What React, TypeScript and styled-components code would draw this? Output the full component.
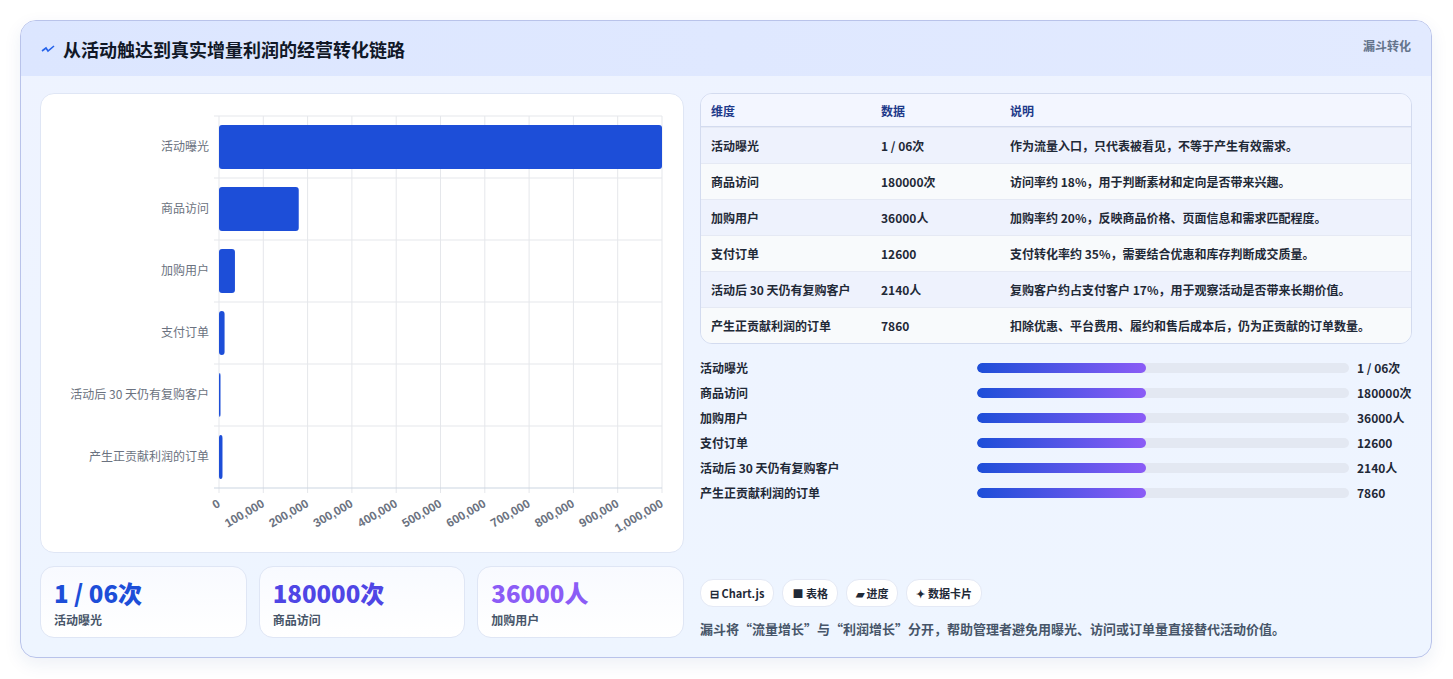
import React from 'react';
import styled, { createGlobalStyle } from 'styled-components';

const FONT = '"Noto Sans CJK SC", "Noto Sans", sans-serif';

const GlobalStyle = createGlobalStyle`
  body {
    margin: 0;
    background: #ffffff;
    font-family: ${FONT};
  }
`;

const Page = styled.div`
  padding: 20px 21px 22px 20px;
`;

const Card = styled.section`
  border: 1px solid #b9c3ea;
  border-radius: 16px;
  background: linear-gradient(180deg, #eef3ff 0%, #eef5ff 100%);
  overflow: hidden;
  box-shadow: 0 6px 18px rgba(30, 58, 138, 0.08);
`;

const Header = styled.header`
  height: 55px;
  display: flex;
  align-items: center;
  justify-content: space-between;
  padding: 0 20px 0 20px;
  background: linear-gradient(90deg, #dce6ff 0%, #e2eaff 100%);
`;

const Title = styled.h1`
  margin: 0;
  display: flex;
  align-items: center;
  gap: 8px;
  font-size: 18px;
  font-weight: 700;
  color: #111827;
`;

const Tag = styled.span`
  align-self: flex-start;
  margin-top: 16px;
  font-size: 12px;
  font-weight: 700;
  color: #64748b;
`;

const Body = styled.div`
  display: grid;
  grid-template-columns: 644px 1fr;
  gap: 16px;
  padding: 17px 19px 19px 19px;
`;

const LeftCol = styled.div`
  display: flex;
  flex-direction: column;
  gap: 13px;
`;

const ChartCard = styled.div`
  height: 460px;
  background: #ffffff;
  border: 1px solid #dfe6f5;
  border-radius: 14px;
  box-sizing: border-box;
`;

const KpiRow = styled.div`
  display: grid;
  grid-template-columns: repeat(3, 1fr);
  gap: 12px;
`;

const Kpi = styled.div`
  height: 72px;
  box-sizing: border-box;
  padding: 10px 13px;
  background: linear-gradient(180deg, #f8faff, #ffffff);
  border: 1px solid #dfe6f5;
  border-radius: 14px;
`;

const KpiValue = styled.div<{ $color: string }>`
  font-size: 24px;
  font-weight: 800;
  line-height: 32px;
  color: ${(p) => p.$color};
`;

const KpiLabel = styled.div`
  font-size: 12px;
  font-weight: 600;
  color: #475569;
  margin-top: 2px;
`;

const RightCol = styled.div`
  display: flex;
  flex-direction: column;
`;

const Table = styled.table`
  width: 100%;
  border-collapse: separate;
  border-spacing: 0;
  border: 1px solid #d3dbef;
  border-radius: 12px;
  overflow: hidden;
  font-size: 12px;
`;

const Th = styled.th`
  text-align: left;
  height: 32px;
  padding: 0 10px;
  font-weight: 700;
  color: #1e3a8a;
  background: #f3f6ff;
  border-bottom: 1px solid #d3dbef;
`;

const Tr = styled.tr<{ $alt: boolean }>`
  background: ${(p) => (p.$alt ? '#f8fafc' : '#eef2fd')};
`;

const Td = styled.td`
  height: 35px;
  padding: 0 10px;
  font-weight: 600;
  color: #1f2937;
  border-top: 1px solid #e5e9f4;
`;

const Progress = styled.div`
  margin-top: 11px;
  display: flex;
  flex-direction: column;
`;

const PRow = styled.div`
  display: grid;
  grid-template-columns: 269px 372px 1fr;
  gap: 8px;
  align-items: center;
  height: 25px;
  font-size: 12px;
  font-weight: 700;
  color: #1f2937;
`;

const Track = styled.div`
  height: 10px;
  border-radius: 5px;
  background: #e3e8f2;
  overflow: hidden;
`;

const Fill = styled.div`
  height: 100%;
  border-radius: 5px;
  background: linear-gradient(90deg, #1d4ed8, #8b5cf6);
`;

const Chips = styled.div`
  margin-top: auto;
  display: flex;
  gap: 8px;
`;

const Chip = styled.span`
  height: 26px;
  padding: 0 9px;
  display: flex;
  align-items: center;
  gap: 4px;
  border-radius: 13px;
  background: #ffffff;
  border: 1px solid #e4e9f5;
  font-size: 11px;
  font-weight: 700;
  color: #1f2937;
`;

const Note = styled.p`
  margin: 12px 0 0;
  font-size: 13px;
  font-weight: 600;
  color: #475569;
`;

const rows = [
  { name: '活动曝光', value: 1000000, data: '1 / 06次', desc: '作为流量入口，只代表被看见，不等于产生有效需求。' },
  { name: '商品访问', value: 180000, data: '180000次', desc: '访问率约 18%，用于判断素材和定向是否带来兴趣。' },
  { name: '加购用户', value: 36000, data: '36000人', desc: '加购率约 20%，反映商品价格、页面信息和需求匹配程度。' },
  { name: '支付订单', value: 12600, data: '12600', desc: '支付转化率约 35%，需要结合优惠和库存判断成交质量。' },
  { name: '活动后 30 天仍有复购客户', value: 2140, data: '2140人', desc: '复购客户约占支付客户 17%，用于观察活动是否带来长期价值。' },
  { name: '产生正贡献利润的订单', value: 7860, data: '7860', desc: '扣除优惠、平台费用、履约和售后成本后，仍为正贡献的订单数量。' },
];

const X0 = 178;
const PW = 443;
const Y0 = 22;
const RH = 62;

const FunnelChart: React.FC = () => (
  <svg width="644" height="460" viewBox="0 0 644 460">
    {Array.from({ length: 11 }).map((_, i) => {
      const x = X0 + (PW * i) / 10;
      return (
        <g key={i}>
          <line x1={x} y1={Y0} x2={x} y2={Y0 + RH * 6 + 5} stroke="#e5e7eb" />
          <text
            x={x + 2}
            y={Y0 + RH * 6 + 18}
            fontSize="12"
            fontWeight="700"
            fill="#6b7280"
            fontFamily='"Liberation Sans", sans-serif'
            textAnchor="end"
            transform={`rotate(-30 ${x + 2} ${Y0 + RH * 6 + 18})`}
          >
            {(i * 100000).toLocaleString('en-US')}
          </text>
        </g>
      );
    })}
    {Array.from({ length: 7 }).map((_, i) => (
      <line key={i} x1={X0 - 5} y1={Y0 + RH * i} x2={X0 + PW} y2={Y0 + RH * i} stroke={i === 6 ? '#cbd5e1' : '#e5e7eb'} />
    ))}
    {rows.map((r, i) => {
      const cy = Y0 + RH * i + RH / 2;
      return (
        <g key={r.name}>
          <text x={X0 - 10} y={cy + 4} fontSize="12" fill="#6b7280" textAnchor="end" fontFamily={FONT}>
            {r.name}
          </text>
          <rect x={X0} y={cy - 22} width={Math.max(1.5, (PW * r.value) / 1000000)} height={44} rx={3} fill="#1d4ed8" />
        </g>
      );
    })}
  </svg>
);

const App: React.FC = () => (
  <Page>
    <GlobalStyle />
    <Card>
      <Header>
        <Title>
          <svg width="14" height="10" viewBox="0 0 14 10">
            <path d="M1 7 L5 4 L7 7 L13 2" stroke="#2563eb" strokeWidth="1.6" fill="none" />
          </svg>
          从活动触达到真实增量利润的经营转化链路
        </Title>
        <Tag>漏斗转化</Tag>
      </Header>
      <Body>
        <LeftCol>
          <ChartCard>
            <FunnelChart />
          </ChartCard>
          <KpiRow>
            <Kpi>
              <KpiValue $color="#1d4ed8">1 / 06次</KpiValue>
              <KpiLabel>活动曝光</KpiLabel>
            </Kpi>
            <Kpi>
              <KpiValue $color="#4f46e5">180000次</KpiValue>
              <KpiLabel>商品访问</KpiLabel>
            </Kpi>
            <Kpi>
              <KpiValue $color="#8b5cf6">36000人</KpiValue>
              <KpiLabel>加购用户</KpiLabel>
            </Kpi>
          </KpiRow>
        </LeftCol>
        <RightCol>
          <Table>
            <thead>
              <tr>
                <Th style={{ width: 150 }}>维度</Th>
                <Th style={{ width: 109 }}>数据</Th>
                <Th>说明</Th>
              </tr>
            </thead>
            <tbody>
              {rows.map((r, i) => (
                <Tr key={r.name} $alt={i % 2 === 1}>
                  <Td>{r.name}</Td>
                  <Td>{r.data}</Td>
                  <Td>{r.desc}</Td>
                </Tr>
              ))}
            </tbody>
          </Table>
          <Progress>
            {rows.map((r) => (
              <PRow key={r.name}>
                <span>{r.name}</span>
                <Track>
                  <Fill style={{ width: '45.4%' }} />
                </Track>
                <span>{r.data}</span>
              </PRow>
            ))}
          </Progress>
          <Chips>
            <Chip>⊟ Chart.js</Chip>
            <Chip>■ 表格</Chip>
            <Chip>▰ 进度</Chip>
            <Chip>✦ 数据卡片</Chip>
          </Chips>
          <Note>漏斗将“流量增长”与“利润增长”分开，帮助管理者避免用曝光、访问或订单量直接替代活动价值。</Note>
        </RightCol>
      </Body>
    </Card>
  </Page>
);

export default App;
